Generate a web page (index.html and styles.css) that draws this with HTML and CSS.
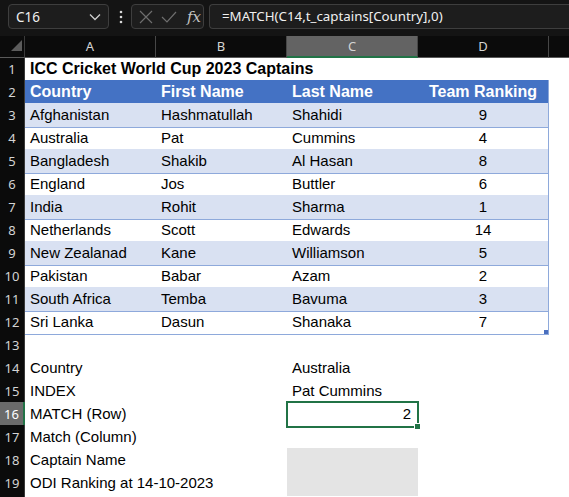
FILE: index.html
```html
<!DOCTYPE html>
<html>
<head>
<meta charset="utf-8">
<link rel="stylesheet" href="styles.css">
</head>
<body>
<div class="topbar">
  <div class="namebox">
    <span>C16</span>
    <svg class="chev" width="12" height="8" viewBox="0 0 12 8"><path d="M1 1.5 L6 6.5 L11 1.5" fill="none" stroke="#cfcfcf" stroke-width="1.3"/></svg>
  </div>
  <svg class="dots" width="4" height="14" viewBox="0 0 4 14"><circle cx="2" cy="2" r="1.3" fill="#d8d8d8"/><circle cx="2" cy="7" r="1.3" fill="#d8d8d8"/><circle cx="2" cy="12" r="1.3" fill="#d8d8d8"/></svg>
  <div class="fxbox">
    <svg width="14" height="14" viewBox="0 0 14 14"><path d="M1 1 L13 13 M13 1 L1 13" stroke="#6e6e6e" stroke-width="1.2" fill="none"/></svg>
    <svg width="16" height="12" viewBox="0 0 16 12"><path d="M1 6 L6 11 L15 1" stroke="#6e6e6e" stroke-width="1.2" fill="none"/></svg>
    <span class="fx">fx</span>
  </div>
  <div class="formula">=MATCH(C14,t_captains[Country],0)</div>
</div>
<div class="sheet">
  <div class="row colhead">
    <div class="corner"><span class="tri"></span></div>
    <div class="ch">A</div>
    <div class="ch">B</div>
    <div class="ch sel">C</div>
    <div class="ch">D</div>
    <div class="ch rest"></div>
  </div>
  <div class="row">
    <div class="rh">1</div>
    <div class="c title">ICC Cricket World Cup 2023 Captains</div>
    <div class="c"></div><div class="c"></div><div class="c"></div><div class="c"></div>
  </div>
  <div class="row t hdr">
    <div class="rh">2</div>
    <div class="c">Country</div><div class="c">First Name</div><div class="c">Last Name</div><div class="c ctr last">Team Ranking</div><div class="c out"></div>
  </div>
  <div class="row t band">
    <div class="rh">3</div>
    <div class="c">Afghanistan</div><div class="c">Hashmatullah</div><div class="c">Shahidi</div><div class="c ctr last">9</div><div class="c out"></div>
  </div>
  <div class="row t">
    <div class="rh">4</div>
    <div class="c">Australia</div><div class="c">Pat</div><div class="c">Cummins</div><div class="c ctr last">4</div><div class="c out"></div>
  </div>
  <div class="row t band">
    <div class="rh">5</div>
    <div class="c">Bangladesh</div><div class="c">Shakib</div><div class="c">Al Hasan</div><div class="c ctr last">8</div><div class="c out"></div>
  </div>
  <div class="row t">
    <div class="rh">6</div>
    <div class="c">England</div><div class="c">Jos</div><div class="c">Buttler</div><div class="c ctr last">6</div><div class="c out"></div>
  </div>
  <div class="row t band">
    <div class="rh">7</div>
    <div class="c">India</div><div class="c">Rohit</div><div class="c">Sharma</div><div class="c ctr last">1</div><div class="c out"></div>
  </div>
  <div class="row t">
    <div class="rh">8</div>
    <div class="c">Netherlands</div><div class="c">Scott</div><div class="c">Edwards</div><div class="c ctr last">14</div><div class="c out"></div>
  </div>
  <div class="row t band">
    <div class="rh">9</div>
    <div class="c">New Zealanad</div><div class="c">Kane</div><div class="c">Williamson</div><div class="c ctr last">5</div><div class="c out"></div>
  </div>
  <div class="row t">
    <div class="rh">10</div>
    <div class="c">Pakistan</div><div class="c">Babar</div><div class="c">Azam</div><div class="c ctr last">2</div><div class="c out"></div>
  </div>
  <div class="row t band">
    <div class="rh">11</div>
    <div class="c">South Africa</div><div class="c">Temba</div><div class="c">Bavuma</div><div class="c ctr last">3</div><div class="c out"></div>
  </div>
  <div class="row t">
    <div class="rh">12</div>
    <div class="c">Sri Lanka</div><div class="c">Dasun</div><div class="c">Shanaka</div><div class="c ctr last"><span>7</span><span class="resize"></span></div><div class="c out"></div>
  </div>
  <div class="row">
    <div class="rh">13</div>
    <div class="c"></div><div class="c"></div><div class="c"></div><div class="c"></div><div class="c"></div>
  </div>
  <div class="row">
    <div class="rh">14</div>
    <div class="c">Country</div><div class="c"></div><div class="c">Australia</div><div class="c"></div><div class="c"></div>
  </div>
  <div class="row">
    <div class="rh">15</div>
    <div class="c">INDEX</div><div class="c"></div><div class="c">Pat Cummins</div><div class="c"></div><div class="c"></div>
  </div>
  <div class="row">
    <div class="rh selrow">16</div>
    <div class="c">MATCH (Row)</div><div class="c"></div><div class="c active">2<span class="handle"></span></div><div class="c"></div><div class="c"></div>
  </div>
  <div class="row">
    <div class="rh">17</div>
    <div class="c">Match (Column)</div><div class="c"></div><div class="c"></div><div class="c"></div><div class="c"></div>
  </div>
  <div class="row">
    <div class="rh">18</div>
    <div class="c">Captain Name</div><div class="c"></div><div class="c grey"></div><div class="c"></div><div class="c"></div>
  </div>
  <div class="row">
    <div class="rh">19</div>
    <div class="c">ODI Ranking at 14-10-2023</div><div class="c"></div><div class="c grey"></div><div class="c"></div><div class="c"></div>
  </div>
  <div class="row">
    <div class="rh"></div>
    <div class="c"></div><div class="c"></div><div class="c"></div><div class="c"></div><div class="c"></div>
  </div>
</div>
</body>
</html>
```

FILE: styles.css
```css
html, body {
  margin: 0;
  padding: 0;
  background: #0c0c0c;
  overflow: hidden;
}
body {
  width: 569px;
  height: 497px;
  font-family: "Liberation Sans", Arial, sans-serif;
}
.topbar {
  height: 36px;
  background: #141414;
  display: flex;
  align-items: flex-start;
  padding-top: 4px;
  box-sizing: border-box;
}
.namebox {
  margin-left: 8px;
  width: 101px;
  height: 25px;
  box-sizing: border-box;
  border: 1px solid #3e3e3e;
  border-radius: 4px;
  background: #1d1d1d;
  display: flex;
  align-items: center;
  justify-content: space-between;
  padding: 0 7px 0 7px;
  color: #f0f0f0;
  font-family: "Noto Sans", "Open Sans", sans-serif;
  font-size: 13.5px;
}
.dots {
  margin: 6px 0 0 10px;
}
.fxbox {
  margin-left: 8px;
  width: 73px;
  height: 25px;
  box-sizing: border-box;
  border: 1px solid #3e3e3e;
  border-radius: 4px;
  background: #1d1d1d;
  display: flex;
  align-items: center;
  gap: 8px;
  padding-left: 7px;
}
.fx {
  font-family: "DejaVu Serif", "Liberation Serif", serif;
  font-style: italic;
  color: #c4c4c4;
  font-size: 15px;
  margin-left: 2px;
}
.formula {
  margin-left: 5px;
  flex: 1;
  height: 25px;
  box-sizing: border-box;
  border: 1px solid #3e3e3e;
  border-right: none;
  border-radius: 4px 0 0 4px;
  background: #1d1d1d;
  color: #f0f0f0;
  font-family: "Noto Sans", "Open Sans", sans-serif;
  font-size: 13.3px;
  line-height: 23px;
  padding-left: 12px;
  white-space: nowrap;
}
.sheet {
  background: #ffffff;
}
.row {
  display: grid;
  grid-template-columns: 25px 131px 131px 131px 131px 1fr;
  height: 23px;
  font-size: 15px;
  color: #000;
}
.colhead {
  height: 21px;
  background: #0b0b0b;
}
.corner {
  position: relative;
  border-right: 1px solid #3a3a3a;
  border-bottom: 1px solid #5a5a5a;
}
.tri {
  position: absolute;
  left: 11px;
  top: 4px;
  width: 0;
  height: 0;
  border-style: solid;
  border-width: 0 0 11px 11px;
  border-color: transparent transparent #5c5c5c transparent;
}
.ch {
  color: #d4d4d4;
  font-family: "Noto Sans", "Open Sans", sans-serif;
  font-size: 13px;
  text-align: center;
  line-height: 20px;
  border-right: 1px solid #474747;
  border-bottom: 1px solid #5a5a5a;
}
.ch.sel {
  background: #636363;
  border-bottom: 2px solid #217346;
  line-height: 20px;
}
.ch.rest {
  border-right: none;
}
.rh {
  background: #0b0b0b;
  color: #d4d4d4;
  font-family: "Noto Sans", "Open Sans", sans-serif;
  font-size: 13px;
  text-align: center;
  line-height: 24px;
  border-bottom: 1px solid #3a3a3a;
  border-right: 1px solid #3a3a3a;
  box-sizing: border-box;
}
.rh.selrow {
  background: #6b6b6b;
  color: #ffffff;
  border-right: 2px solid #217346;
}
.c {
  padding: 0 5px;
  line-height: 24px;
  white-space: nowrap;
  overflow: visible;
  box-sizing: border-box;
}
.ctr {
  text-align: center;
}
.title {
  font-weight: bold;
  font-size: 16px;
}
.t .c {
  border-bottom: 1px solid #8ea9db;
}
.t .c.out {
  border-bottom: none;
}
.t .c.last {
  border-right: 1px solid #8ea9db;
  position: relative;
}
.hdr .c {
  background: #4472c4;
  color: #ffffff;
  font-weight: bold;
  font-size: 16px;
}
.hdr .c.out {
  background: #ffffff;
}
.band .c {
  background: #d9e1f2;
}
.band .c.out {
  background: #ffffff;
}
.resize {
  position: absolute;
  right: 0;
  bottom: 0;
  width: 4px;
  height: 4px;
  background: #4a6fbf;
}
.active {
  position: relative;
  text-align: right;
  outline: 2px solid #217346;
  outline-offset: -1px;
  padding-right: 7px;
}
.handle {
  position: absolute;
  right: -3px;
  bottom: -3px;
  width: 5px;
  height: 5px;
  background: #217346;
  border: 1px solid #ffffff;
}
.grey {
  background: #e4e4e4;
}
```
